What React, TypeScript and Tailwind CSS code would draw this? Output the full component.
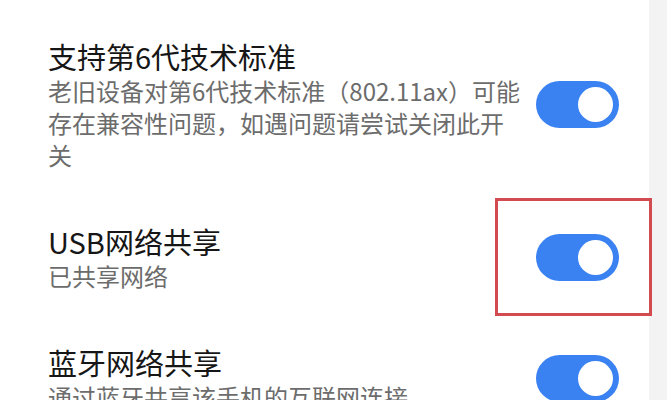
import React from "react";

const font = {
  fontFamily: '"Noto Sans CJK SC", "Noto Sans", sans-serif',
};

function Toggle({ highlight }: { highlight?: boolean }) {
  return (
    <div className="relative shrink-0">
      <div className="w-[83px] h-[47px] rounded-full bg-[#3a82f2] flex items-center justify-end pr-[6px]">
        <div className="w-[35px] h-[35px] rounded-full bg-white" />
      </div>
      {highlight && (
        <div className="absolute left-[-41px] top-[-36px] w-[157px] h-[118px] border-[3px] border-[#d24b50]" />
      )}
    </div>
  );
}

function Row({
  title,
  lines,
  highlight,
}: {
  title: string;
  lines: string[];
  highlight?: boolean;
}) {
  return (
    <div className="flex items-center justify-between pl-[48px] pr-[30px] pt-[25px] pb-[26px]">
      <div className="flex flex-col whitespace-nowrap">
        <div className="text-[29px] leading-[38px] text-[#161616]">{title}</div>
        <div className="text-[24px] leading-[32px] text-[#6c6c6c]">
          {lines.map((l, i) => (
            <div key={i}>{l}</div>
          ))}
        </div>
      </div>
      <Toggle highlight={highlight} />
    </div>
  );
}

export default function App() {
  return (
    <div className="w-[667px] h-[400px] overflow-hidden flex bg-white" style={font}>
      <div className="flex-1 flex flex-col pt-[12px]">
        <Row
          title="支持第6代技术标准"
          lines={[
            "老旧设备对第6代技术标准（802.11ax）可能",
            "存在兼容性问题，如遇问题请尝试关闭此开",
            "关",
          ]}
        />
        <Row title="USB网络共享" lines={["已共享网络"]} highlight />
        <Row title="蓝牙网络共享" lines={["通过蓝牙共享该手机的互联网连接"]} />
      </div>
      <div className="w-[18px] bg-[#f3f3f3]" />
    </div>
  );
}
